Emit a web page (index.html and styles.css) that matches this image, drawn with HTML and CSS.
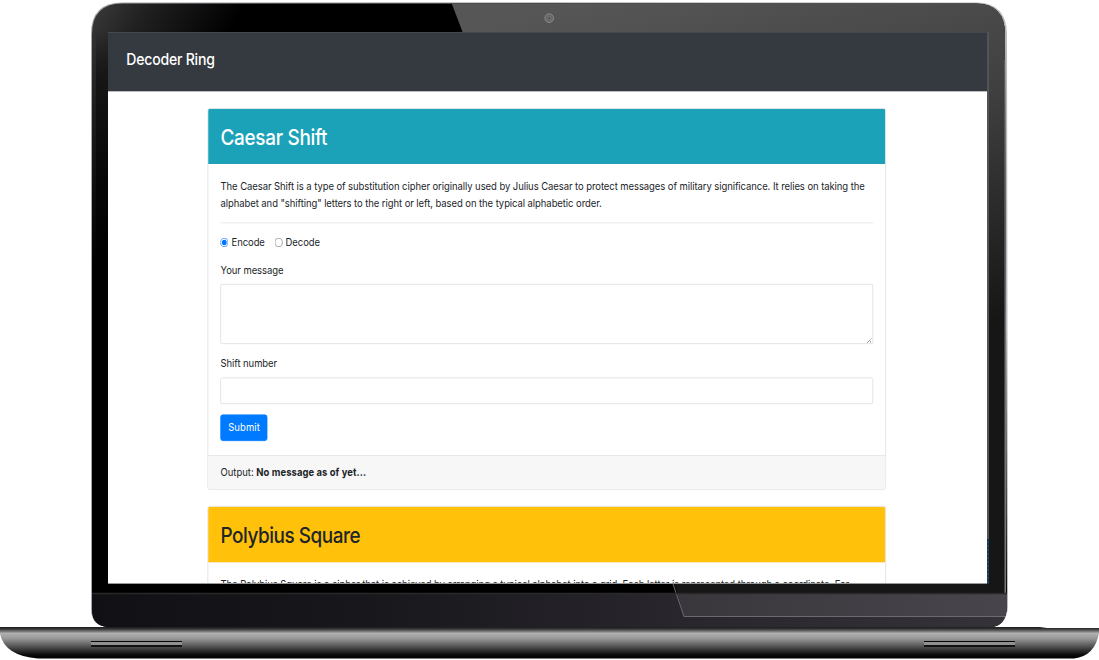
FILE: index.html
```html
<!DOCTYPE html>
<html lang="en">
<head>
<meta charset="utf-8">
<title>Decoder Ring</title>
<link rel="stylesheet" href="styles.css">
</head>
<body>
<div class="laptop">
  <svg class="shell" viewBox="0 0 1099 660" width="1099" height="660" aria-hidden="true">
    <defs>
      <linearGradient id="rim" x1="0" x2="1" y1="0" y2="0"><stop offset="0" stop-color="#a5a5ad"/><stop offset=".5" stop-color="#85858c"/><stop offset="1" stop-color="#bcb8bd"/></linearGradient>
      <linearGradient id="dark" gradientUnits="userSpaceOnUse" x1="94" y1="10" x2="205" y2="75"><stop offset="0" stop-color="#383838"/><stop offset=".35" stop-color="#202020"/><stop offset="1" stop-color="#000"/></linearGradient>
      <linearGradient id="side" x1="0" x2="0" y1="0" y2="1"><stop offset="0" stop-color="#191919" stop-opacity="0"/><stop offset=".08" stop-color="#161616"/><stop offset=".25" stop-color="#080808"/><stop offset=".4" stop-color="#000"/></linearGradient>
      <linearGradient id="glare" gradientUnits="userSpaceOnUse" x1="600" y1="0" x2="690" y2="390"><stop offset="0" stop-color="#565656"/><stop offset=".45" stop-color="#3f3f3f"/><stop offset=".75" stop-color="#292929"/><stop offset="1" stop-color="#161616"/></linearGradient>
      <linearGradient id="chin" x1="0" x2="1" y1="0" y2="0"><stop offset="0" stop-color="#111015"/><stop offset=".3" stop-color="#18171c"/><stop offset=".65" stop-color="#29272d"/><stop offset="1" stop-color="#353339"/></linearGradient>
      <linearGradient id="shine" x1="0" x2="1" y1="0" y2="0"><stop offset="0" stop-color="#39373c"/><stop offset="1" stop-color="#48464c"/></linearGradient>
      <linearGradient id="base" x1="0" x2="0" y1="0" y2="1"><stop offset="0" stop-color="#1b1b1b"/><stop offset=".06" stop-color="#333"/><stop offset=".14" stop-color="#777"/><stop offset=".2" stop-color="#b0b0b0"/><stop offset=".36" stop-color="#999"/><stop offset=".65" stop-color="#4a4a4a"/><stop offset=".88" stop-color="#0b0b0b"/><stop offset="1" stop-color="#000"/></linearGradient>
      <clipPath id="lid"><path d="M92 34Q92 4 122 3.5H976Q1005 4 1005 34L1007 606Q1006 627 990 627H108Q92 626 92 609Z"/></clipPath>
    </defs>
    <path d="M91 34Q91 2.5 122 2.5H977Q1006.500 3 1007 34L1008 606Q1007 627 990 627H108Q91 626 91 609Z" fill="url(#rim)"/>
    <g clip-path="url(#lid)">
      <rect x="92" y="3" width="916" height="625" fill="url(#dark)"/>
      <rect x="96" y="32" width="13" height="552" fill="url(#side)"/>
      <path d="M451.500 3H1005V593H677.500Z" fill="url(#glare)"/>
      <rect x="1004.500" y="60" width="1.500" height="540" fill="#77757a"/>
      <rect x="92" y="593" width="916" height="35" fill="url(#chin)"/>
      <path d="M677 593H1008V616.500H684Z" fill="url(#shine)"/>
      <path d="M673 584L684 616.500H1006" fill="none" stroke="#6b6a70"/>
      <path d="M92 593.500H1008" stroke="#29292a" stroke-width="1.500"/>
    </g>
    <circle cx="549.200" cy="18.200" r="4.300" fill="#666" stroke="#8c8c8c"/>
    <circle cx="549.200" cy="18.200" r="1.800" fill="#555" stroke="#7c7c7c" stroke-width=".8"/>
    <path d="M0 627H1040L1047 628H1099V633Q1095 656 1074 658.500H38Q5 656 0 634Z" fill="url(#base)"/>
    <path d="M91 641.500H182M924 641.500H1015" stroke="#080808"/>
    <path d="M91 643.500H182M924 643.500H1015" stroke="#8f918f" stroke-width="3"/>
    <path d="M91 646H182M924 646H1015" stroke="#111" stroke-width="2"/>
    <rect x="987" y="32" width="2" height="507" fill="#505458"/>
    <rect x="987" y="539" width="2" height="45" fill="#17344c"/>
    <path d="M988 541V584" stroke="#28587c" stroke-dasharray="2 2"/>
  </svg>
  <div class="screen">
    <div class="page">
      <nav class="navbar"><span class="brand">Decoder Ring</span></nav>
      <main class="container">
        <section class="card">
          <header class="card-header info"><h2>Caesar Shift</h2></header>
          <div class="card-body">
            <p>The Caesar Shift is a type of substitution cipher originally used by Julius Caesar to protect messages of military significance. It relies on taking the<br>alphabet and "shifting" letters to the right or left, based on the typical alphabetic order.</p>
            <hr>
            <form>
              <div class="choices">
                <label class="choice"><input type="radio" name="mode" checked><span>Encode</span></label>
                <label class="choice"><input type="radio" name="mode"><span>Decode</span></label>
              </div>
              <label class="field" for="message">Your message</label>
              <textarea class="control" id="message" rows="3"></textarea>
              <label class="field" for="shift">Shift number</label>
              <input class="control" id="shift" type="text">
              <button class="btn" type="button">Submit</button>
            </form>
          </div>
          <footer class="card-footer">Output: <strong>No message as of yet...</strong></footer>
        </section>
        <section class="card">
          <header class="card-header warning"><h2 class="wide">Polybius Square</h2></header>
          <div class="card-body">
            <p>The Polybius Square is a cipher that is achieved by arranging a typical alphabet into a grid. Each letter is represented through a coordinate. For</p>
          </div>
        </section>
      </main>
    </div>
  </div>
</div>
</body>
</html>
```
FILE: styles.css
```css
* { box-sizing: border-box; }

body {
  margin: 0;
  background: #fff;
  overflow: hidden;
}

.laptop {
  position: relative;
  width: 1099px;
  height: 660px;
  padding: 32px 0 0 108px;
}

.shell {
  position: absolute;
  left: 0;
  top: 0;
}

.screen {
  position: relative;
  width: 879px;
  height: 552px;
  overflow: hidden;
  background: #fff;
  border-bottom: 1px solid #999;
}

/* A 1440px wide desktop page, shrunk to fit the display */
.page {
  width: 1440px;
  height: 790px;
  overflow: hidden;
  transform: scale(.6106, .698);
  transform-origin: 0 0;
  font: 400 15.5px/24px Inter, "Liberation Sans", sans-serif;
  letter-spacing: -.1px;
  color: #212529;
}

.navbar {
  height: 84.500px;
  padding: 23px 30px;
  background: #343a40;
  border-top: 1px solid #4b5257;
  color: #fff;
}

.brand {
  display: block;
  font-size: 23px;
  line-height: 30px;
  font-weight: 500;
  letter-spacing: -.35px;
}

.container {
  width: 1111px;
  margin: 24px 0 0 163.300px;
}

.card {
  margin-bottom: 23px;
  border: 1px solid #d9d9d9;
  border-radius: 4px;
  background: #fff;
}

.card-header {
  height: 79px;
  padding: 22px 20px 18px;
  border-bottom: 1px solid rgba(0, 0, 0, .125);
  border-radius: 3px 3px 0 0;
}

.info { background: #1ba2b8; color: #fff; }
.warning { height: 80px; background: #ffc10a; }

h2 {
  margin: 0;
  font-size: 31px;
  line-height: 38px;
  font-weight: 500;
  letter-spacing: -.5px;
}

.wide { letter-spacing: -.75px; }

.card-body { padding: 20px; }

p { margin: 0 0 16px; white-space: nowrap; }

hr {
  margin: 0 0 16px;
  border: 0;
  border-top: 1px solid #dedede;
}

.choices { display: flex; gap: 16px; margin-bottom: 15px; }
.choice { display: flex; align-items: center; gap: 5px; }
.choice input { width: 13px; height: 13px; margin: 0; accent-color: #0075ff; }

.field { display: block; margin-bottom: 8px; }

.control {
  display: block;
  width: 100%;
  height: 38px;
  margin: 0 0 15px;
  padding: 6px 12px;
  border: 1px solid #d3d6d9;
  border-radius: 3px;
  background: #fff;
  font: inherit;
}

textarea.control { height: 86px; margin-bottom: 16px; }

.btn {
  display: block;
  height: 38px;
  padding: 6px 11.500px;
  border: 1px solid #007bff;
  border-radius: 4px;
  background: #007bff;
  color: #fff;
  font: inherit;
  letter-spacing: .15px;
}

.card-footer {
  padding: 12px 20px;
  border-top: 1px solid #d9d9d9;
  border-radius: 0 0 3px 3px;
  background: #f7f7f7;
  letter-spacing: 0;
}

strong { font-weight: 700; letter-spacing: .1px; }
```
